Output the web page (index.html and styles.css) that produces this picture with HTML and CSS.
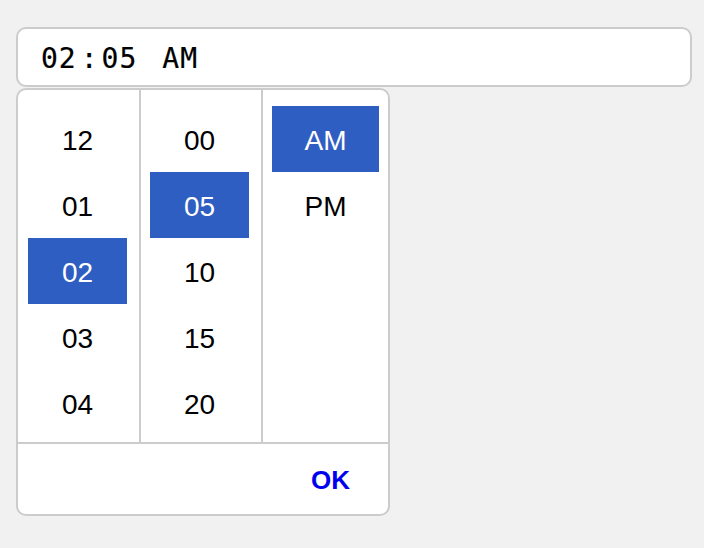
FILE: index.html
```html
<!DOCTYPE html>
<html lang="en">
<head>
<meta charset="utf-8">
<title>Time picker</title>
<link rel="stylesheet" href="styles.css">
</head>
<body>
<div class="page">
  <div class="time-input">
    <span class="field">02</span><span class="sep">:</span><span class="field">05</span><span class="sep gap"> </span><span class="field">AM</span>
  </div>
  <div class="picker">
    <div class="columns">
      <div class="col col-hours">
        <div class="item">12</div>
        <div class="item">01</div>
        <div class="item selected">02</div>
        <div class="item">03</div>
        <div class="item">04</div>
      </div>
      <div class="col col-minutes">
        <div class="item">00</div>
        <div class="item selected">05</div>
        <div class="item">10</div>
        <div class="item">15</div>
        <div class="item">20</div>
      </div>
      <div class="col col-ampm">
        <div class="item selected">AM</div>
        <div class="item">PM</div>
      </div>
    </div>
    <div class="footer">
      <span class="ok">OK</span>
    </div>
  </div>
</div>
</body>
</html>
```

FILE: styles.css
```css
html, body {
  margin: 0;
  padding: 0;
  background: #f1f1f1;
}

.page {
  padding: 27px 12px 0 16px;
  display: flex;
  flex-direction: column;
  align-items: flex-start;
}

.time-input {
  box-sizing: border-box;
  width: 676px;
  height: 60px;
  border: 2px solid #cccccc;
  border-radius: 10px;
  background: #ffffff;
  display: flex;
  align-items: center;
  padding-left: 22px;
  padding-top: 2px;
  font-family: "DejaVu Sans Mono", monospace;
  font-size: 28px;
  color: #000;
  margin-bottom: 1px;
  -webkit-text-stroke: 0.2px #000;
}

.field {
  padding: 0 1px;
  letter-spacing: 1px;
}

.sep {
  padding: 0 3px;
}

.sep.gap {
  padding: 0 12px 0 11px;
}

.picker {
  box-sizing: border-box;
  width: 374px;
  height: 428px;
  border: 2px solid #cccccc;
  border-radius: 10px;
  background: #ffffff;
  display: flex;
  flex-direction: column;
  overflow: hidden;
}

.columns {
  display: flex;
  height: 352px;
  border-bottom: 2px solid #cccccc;
}

.col {
  box-sizing: border-box;
  padding-top: 16px;
  display: flex;
  flex-direction: column;
}

.col-hours {
  width: 123px;
  padding-left: 10px;
  padding-right: 12px;
  border-right: 2px solid #cccccc;
}

.col-minutes {
  width: 122px;
  padding-left: 9px;
  padding-right: 12px;
  border-right: 2px solid #cccccc;
}

.col-ampm {
  flex: 1;
  padding-left: 9px;
  padding-right: 9px;
}

.item {
  box-sizing: border-box;
  height: 66px;
  padding-top: 3px;
  display: flex;
  align-items: center;
  justify-content: center;
  font-family: "Liberation Sans", Arial, sans-serif;
  font-size: 28px;
  color: #000;
}

.item.selected {
  background: #2f5ec2;
  color: #ffffff;
}

.footer {
  flex: 1;
  display: flex;
  align-items: center;
  justify-content: flex-end;
  padding-right: 38px;
  padding-top: 2px;
}

.ok {
  font-family: "Liberation Sans", Arial, sans-serif;
  font-weight: bold;
  font-size: 26px;
  color: #0000f0;
}
```
